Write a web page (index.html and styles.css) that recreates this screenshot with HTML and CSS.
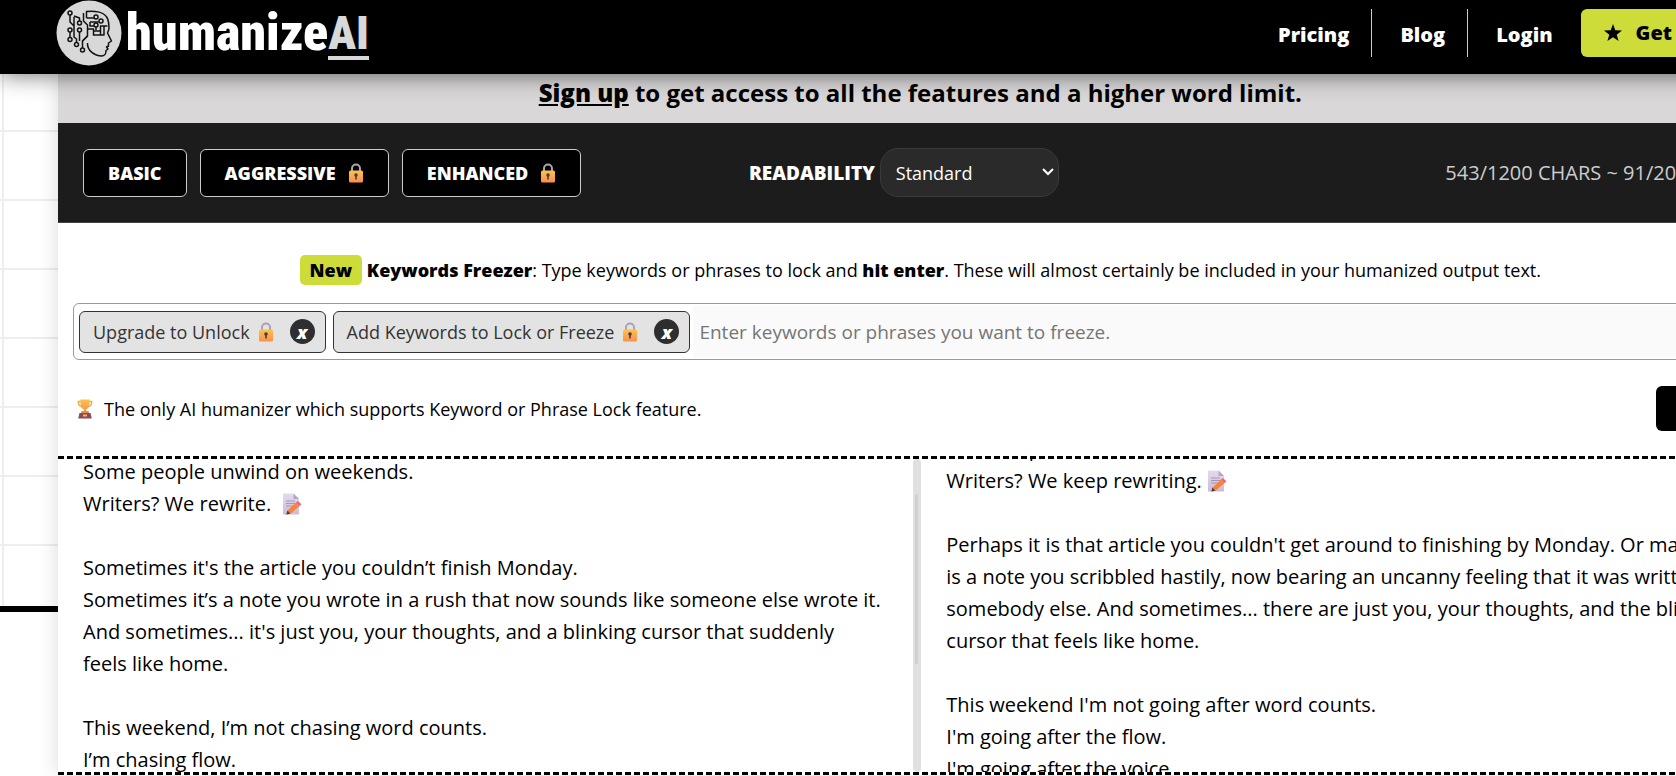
FILE: index.html
```html
<!DOCTYPE html>
<html lang="en">
<head>
    <meta charset="UTF-8">
    <meta name="viewport" content="width=device-width, initial-scale=1.0">
    <title>humanizeAI</title>
    <link rel="stylesheet" href="styles.css">
</head>
<body>
    <!-- shared icons -->
    <svg width="0" height="0" class="sprite" aria-hidden="true">
        <defs>
            <linearGradient id="gold" x1="0" y1="0" x2="0" y2="1">
                <stop offset="0" stop-color="#fcc24a"/>
                <stop offset="1" stop-color="#f9904d"/>
            </linearGradient>
            <linearGradient id="paper" x1="0" y1="0" x2="0" y2="1">
                <stop offset="0" stop-color="#e2dcf0"/>
                <stop offset="1" stop-color="#cdbbd8"/>
            </linearGradient>
            <symbol id="lock" viewBox="0 0 16 20">
                <path d="M4 9V5.500a4 4 0 0 1 8 0V9" fill="none" stroke="#aaa3b3" stroke-width="2"/>
                <rect x="1" y="7.500" width="14" height="12" rx="1.500" fill="url(#gold)"/>
                <circle cx="8" cy="12" r="1.800" fill="#4b3a4c"/>
                <path d="M7.200 12h1.600v4.500H7.200z" fill="#4b3a4c"/>
            </symbol>
            <symbol id="trophy" viewBox="0 0 16 20">
                <path d="M4 2.500H1.300c0 3 1 5 3.700 5M12 2.500h2.700c0 3-1 5-3.700 5" fill="none" stroke="#f5a83c" stroke-width="1.400"/>
                <path d="M3.500.5h9V5c0 3-1.500 5-3.500 5.500V13H7v-2.500C5 10 3.500 8 3.500 5z" fill="url(#gold)"/>
                <path d="M4.500 12h7l.7 2.500H3.800z" fill="#e0913f"/>
                <path d="M2.500 14h11l1.300 5.500H1.200z" fill="#8b4a5c"/>
                <rect x="6" y="15.500" width="4" height="2" fill="#f2b95a"/>
            </symbol>
            <symbol id="memo" viewBox="0 0 20 22">
                <path d="M1 .5h10.500L17 6v15.500H1z" fill="url(#paper)"/>
                <path d="M11.500.5L17 6h-5.500z" fill="#b3a5c4"/>
                <path d="M4 8h9M4 10.500h9M4 13h7" stroke="#a597b5" stroke-width="1"/>
                <path d="M5.500 17.500L14 9.500l3.500 3.500-8.500 7.500-4.500 1z" fill="#f5843d"/>
                <path d="M14 9.500l1.800-1.500 3.700 3.300-2 1.700z" fill="#f0646e"/>
                <path d="M5.500 17.500l-1.200 4 4-.8z" fill="#4b3a4c"/>
            </symbol>
        </defs>
    </svg>

    <div class="page">
        <header class="header">
            <a href="#" class="logo">
                <svg class="logo-icon" viewBox="0 0 66 66" aria-hidden="true">
                    <circle cx="33" cy="33" r="32.500" fill="#d8d8d8"/>
                    <g fill="none" stroke="#111" stroke-width="1.500" stroke-linejoin="round">
                        <circle cx="14" cy="13" r="2"/>
                        <circle cx="23.500" cy="23" r="2"/>
                        <circle cx="14" cy="30" r="2"/>
                        <circle cx="23.500" cy="30" r="2"/>
                        <circle cx="14" cy="39.500" r="2"/>
                        <circle cx="20.500" cy="44.500" r="2"/>
                        <circle cx="26.500" cy="50" r="2"/>
                        <circle cx="40" cy="17" r="2"/>
                        <circle cx="45" cy="21" r="2"/>
                        <circle cx="40" cy="25" r="2"/>
                        <path d="M14 15v7l4 4v-9M18 16l5.500 2v3M14 32v5.500M18 24v13l2.500 2v3.500M23.500 32v9M27.500 13v8l4 4v11l-5 5v7"/>
                        <path d="M30.500 18v-6.500c7-1 17 0 20.500 6 2 3.500 2 7 2 11.500M30.500 18h7.500M34 22h8.500M34 22v4h4M31.500 29h6v6.500M37.500 31h7M40 27v3M44.500 35V26h7M48 26v9h-11M31.500 36l-5 5"/>
                        <path d="M53 29l-1.500 4 4 8-3 2v3l-2 1 1.500 2-2 1.500c0 4-1 5-4 5.500C38 56 31 50 31.500 43"/>
                    </g>
                </svg>
                <span class="logo-text">humanize<span class="logo-ai">AI</span></span>
            </a>
            <nav class="nav">
                <a href="#" class="nav-link">Pricing</a>
                <a href="#" class="nav-link">Blog</a>
                <a href="#" class="nav-link">Login</a>
                <a href="#" class="nav-button">
                    <svg width="18" height="18" viewBox="0 0 18 18" aria-hidden="true">
                        <path d="M9 0l2.300 6.300 6.700.2-5.300 4.200L14.600 17 9 13.300 3.400 17l1.900-6.300L0 6.500l6.700-.2z"/>
                    </svg>
                    Get Started
                </a>
            </nav>
        </header>

        <main class="main">
            <div class="card">
                <p class="banner"><a href="#">Sign up</a> to get access to all the features and a higher word limit.</p>

                <div class="toolbar">
                    <div class="modes">
                        <button type="button" class="mode">BASIC</button>
                        <button type="button" class="mode">AGGRESSIVE <svg class="lock"><use href="#lock"/></svg></button>
                        <button type="button" class="mode">ENHANCED <svg class="lock"><use href="#lock"/></svg></button>
                    </div>
                    <div class="readability">
                        <label for="readability">READABILITY</label>
                        <div class="select-wrap">
                            <select id="readability">
                                <option>Standard</option>
                            </select>
                            <svg class="chevron" viewBox="0 0 12 8" aria-hidden="true"><path d="M1 1l5 5 5-5"/></svg>
                        </div>
                    </div>
                    <span class="count">543/1200 CHARS ~ 91/200 WORDS</span>
                </div>

                <div class="freezer">
                    <label for="keywords" class="freezer-title">
                        <span class="badge">New</span> <b>Keywords Freezer</b>: Type keywords or phrases to lock and <b>hit enter</b>. These will almost certainly be included in your humanized output text.
                    </label>
                    <div class="keywords">
                        <span class="tag">Upgrade to Unlock <svg class="lock"><use href="#lock"/></svg><button type="button" class="remove">x</button></span>
                        <span class="tag">Add Keywords to Lock or Freeze <svg class="lock"><use href="#lock"/></svg><button type="button" class="remove">x</button></span>
                        <input type="text" id="keywords" placeholder="Enter keywords or phrases you want to freeze.">
                    </div>
                    <div class="freezer-footer">
                        <p><svg class="trophy"><use href="#trophy"/></svg>The only AI humanizer which supports Keyword or Phrase Lock feature.</p>
                        <button type="button" class="save" aria-label="Save"></button>
                    </div>
                </div>

                <div class="editor">
                    <div class="pane pane-source" id="source" contenteditable="true" role="textbox" aria-label="Your text">Some people unwind on weekends.<br>Writers? We rewrite. <svg class="memo memo-wide"><use href="#memo"/></svg><br><br>Sometimes it's the article you couldn’t finish Monday.<br>Sometimes it’s a note you wrote in a rush that now sounds like someone else wrote it.<br>And sometimes... it's just you, your thoughts, and a blinking cursor that suddenly feels like home.<br><br>This weekend, I’m not chasing word counts.<br>I’m chasing flow.<br><br></div>
                    <div class="track"><div class="thumb"></div></div>
                    <div class="pane" id="result" contenteditable="true" role="textbox" aria-label="Humanized text">Some unpack on weekends.<br>Writers? We keep rewriting. <svg class="memo"><use href="#memo"/></svg><br><br>Perhaps it is that article you couldn't get around to finishing by Monday. Or maybe it<br>is a note you scribbled hastily, now bearing an uncanny feeling that it was written by<br>somebody else. And sometimes... there are just you, your thoughts, and the blinking<br>cursor that feels like home.<br><br>This weekend I'm not going after word counts.<br>I'm going after the flow.<br>I'm going after the voice.<br><br></div>
                </div>
            </div>
        </main>
    </div>

    <script>
        document.getElementById('source').scrollTop = 27;
        document.getElementById('result').scrollTop = 50;
    </script>
</body>
</html>
```

FILE: styles.css
```css
* {
    box-sizing: border-box;
}
body {
    margin: 0;
    height: 100vh;
    overflow: hidden;
    background-color: #fff;
    color: #000;
    font-family: "Segoe UI", "Open Sans", "Noto Sans", sans-serif;
    font-size: 20px;
}
p {
    margin: 0;
}
a {
    color: inherit;
}
button,
input,
select {
    font-family: inherit;
    font-size: inherit;
}
.sprite {
    position: absolute;
}
.page {
    width: 110%;
}

/* header */
.header {
    position: relative;
    z-index: 2;
    display: flex;
    justify-content: space-between;
    height: 74px;
    padding: 0 61px 0 56px;
    background-color: #000;
    color: #fff;
    box-shadow: 0 0 24px rgba(0, 0, 0, 0.6);
}
.logo {
    display: flex;
    gap: 4px;
    text-decoration: none;
}
.logo-icon {
    width: 66px;
    height: 66px;
}
.logo-text {
    font-family: "Roboto Condensed", Roboto, sans-serif;
    font-size: 52px;
    font-weight: 900;
    line-height: 66px;
    white-space: nowrap;
}
.logo-ai {
    display: inline-block;
    height: 60px;
    border-bottom: 4px solid #d8d8d8;
    color: #d8d8d8;
    font-size: 46px;
    vertical-align: top;
}
.nav {
    display: flex;
    padding: 9px 0 17px;
    font-weight: 800;
    line-height: 52px;
}
.nav-link {
    height: 48px;
    padding: 0 22px 0 28px;
    border-right: 1px solid #ccc;
    text-decoration: none;
}
.nav-link:nth-child(3) {
    padding-right: 28px;
    border-right: none;
}
.nav-button {
    display: flex;
    align-items: center;
    gap: 14px;
    width: 202px;
    height: 48px;
    padding-left: 23px;
    border-radius: 6px;
    background-color: #cddc39;
    color: #000;
    text-decoration: none;
    white-space: nowrap;
}

/* page background */
.main {
    height: 538px;
    padding: 0 61px 0 58px;
    border-bottom: 6px solid #000;
    background-image: linear-gradient(#eee 2px, transparent 2px), linear-gradient(90deg, #eee 2px, transparent 2px);
    background-size: 70px 69px;
    background-position: 2px 56px;
}
.card {
    background-color: #fff;
    box-shadow: 0 0 20px rgba(0, 0, 0, 0.15);
}
.banner {
    height: 49px;
    background-color: #d9d7d7;
    font-size: 24px;
    font-weight: 700;
    line-height: 38px;
    text-align: center;
}
.banner a {
    font-weight: 800;
}

/* toolbar */
.toolbar {
    display: flex;
    align-items: center;
    height: 100px;
    padding: 0 18px 0 25px;
    border-bottom: 1px solid #444;
    background-color: #1c1c1c;
    color: #fff;
}
.modes {
    display: flex;
    flex: 0 0 666px;
    gap: 13px;
}
.mode {
    display: flex;
    align-items: center;
    height: 48px;
    padding: 0 24px;
    border: 1px solid #ccc;
    border-radius: 6px;
    background-color: #000;
    color: #fff;
    font-size: 18px;
    font-weight: 800;
}
.lock {
    width: 16px;
    height: 20px;
    margin-left: 8px;
}
.mode .lock {
    margin-left: 12px;
}
.readability {
    display: flex;
    align-items: center;
    gap: 5px;
}
.readability label {
    font-size: 19px;
    font-weight: 800;
}
.select-wrap {
    position: relative;
}
.select-wrap select {
    width: 179px;
    height: 49px;
    padding: 0 15px;
    border: 1px solid #3a3a3a;
    border-radius: 18px;
    background-color: #2a2a2a;
    color: #fff;
    font-size: 18px;
    appearance: none;
}
.chevron {
    position: absolute;
    top: 20px;
    right: 5px;
    width: 12px;
    height: 8px;
    fill: none;
    stroke: #fff;
    stroke-width: 2;
}
.count {
    margin-left: auto;
    color: #ccc;
    white-space: nowrap;
}

/* keywords freezer */
.freezer {
    padding: 32px 15px 25px;
    font-size: 18px;
}
.freezer-title {
    display: block;
    line-height: 30px;
    text-align: center;
}
.freezer-title b {
    font-weight: 800;
}
.badge {
    display: inline-block;
    padding: 0 10px;
    border-radius: 5px;
    background-color: #cddc39;
    font-weight: 800;
}
.keywords {
    display: flex;
    align-items: center;
    gap: 7px;
    height: 57px;
    margin-top: 18px;
    padding: 2px 5px;
    border: 1px solid #999;
    border-radius: 6px;
}
.tag {
    display: flex;
    align-items: center;
    height: 42px;
    padding: 0 10px 0 13px;
    border: 1px solid #333;
    border-radius: 6px;
    background-color: #e3e3e3;
    color: #333;
    white-space: nowrap;
}
.remove {
    width: 25px;
    height: 25px;
    margin-left: 16px;
    padding: 0;
    border: none;
    border-radius: 50%;
    background-color: #2e2e2e;
    color: #fff;
    font-style: italic;
    font-weight: 800;
    line-height: 20px;
}
.keywords input {
    flex: 1;
    height: 52px;
    margin-left: -4px;
    padding: 0 6px;
    border: none;
    background-color: #fafafa;
    font-size: 19px;
}
.keywords input::placeholder {
    color: #757575;
}
.freezer-footer {
    display: flex;
    align-items: center;
    justify-content: space-between;
    margin-top: 26px;
    padding-left: 4px;
}
.trophy {
    width: 16px;
    height: 20px;
    margin-right: 11px;
    vertical-align: -3px;
}
.save {
    width: 112px;
    height: 45px;
    border: none;
    border-radius: 6px;
    background-color: #000;
}

/* editor */
.editor {
    display: grid;
    grid-template-columns: calc(50% - 7px) 8px 1fr;
    height: 319px;
    border-top: 3px dashed #000;
    border-bottom: 3px dashed #000;
}
.pane {
    padding: 24px 25px 0;
    overflow: hidden;
    line-height: 32px;
    outline: none;
}
.pane-source {
    padding-right: 32px;
}
.memo {
    width: 20px;
    height: 22px;
    vertical-align: -4px;
}
.memo-wide {
    margin-left: 6px;
}
.track {
    padding: 35px 2px 0;
    border-radius: 4px;
    background-color: #e0e0e0;
}
.thumb {
    width: 3px;
    height: 170px;
    border-radius: 2px;
    background-color: #d0d0d0;
}
```
